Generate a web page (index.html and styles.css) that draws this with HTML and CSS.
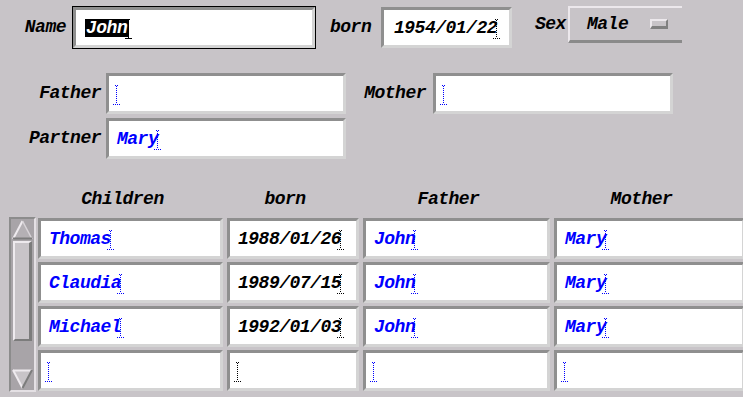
FILE: index.html
```html
<!DOCTYPE html>
<html>
<head>
<meta charset="utf-8">
<link rel="stylesheet" href="styles.css">
</head>
<body>
<div class="win">
  <div class="row1">
    <div class="lbl l-name">Name</div>
    <div class="tf tf-focus w-name"><span class="sel">John</span><svg class="car car-solid" width="7" height="20" viewBox="0 0 7 20"><path d="M2 .5h3M3.5 1v18M0 19.5h7" stroke="#000"/></svg></div>
    <div class="lbl l-born">born</div>
    <div class="tf w-born"><span>1954/01/22</span><svg class="car" width="7" height="20" viewBox="0 0 7 20"><path d="M2 .5h3M3.5 1v18M0 19.5h7" stroke="#000" stroke-dasharray="1 1"/></svg></div>
    <div class="lbl l-sex">Sex</div>
    <div class="opt"><span>Male</span><span class="ind"></span></div>
  </div>

  <div class="rel">
    <div class="lbl rl">Father</div>
    <div class="tf blue"><svg class="car" width="7" height="20" viewBox="0 0 7 20"><path d="M2 .5h3M3.5 1v18M0 19.5h7" stroke="#00f" stroke-dasharray="1 1"/></svg></div>
    <div class="lbl rl rl2">Mother</div>
    <div class="tf blue"><svg class="car" width="7" height="20" viewBox="0 0 7 20"><path d="M2 .5h3M3.5 1v18M0 19.5h7" stroke="#00f" stroke-dasharray="1 1"/></svg></div>
    <div class="lbl rl">Partner</div>
    <div class="tf blue"><span>Mary</span><svg class="car" width="7" height="20" viewBox="0 0 7 20"><path d="M2 .5h3M3.5 1v18M0 19.5h7" stroke="#00f" stroke-dasharray="1 1"/></svg></div>
  </div>

  <div class="hdr">
    <div class="h">Children</div>
    <div class="h">born</div>
    <div class="h">Father</div>
    <div class="h">Mother</div>
  </div>

  <div class="tbl">
    <div class="sb">
      <svg class="arr" width="21" height="20" viewBox="0 0 21 20">
        <polygon points="10.5,1 1,19 20,19" fill="#b4b0b4"/>
        <path d="M10.5 1L1 19" stroke="#eeeaee" stroke-width="2"/>
        <path d="M10.5 1L20 19" stroke="#d8d4d8" stroke-width="1.5"/>
        <path d="M1 18.5H20" stroke="#7c7c7c" stroke-width="2"/>
      </svg>
      <div class="thumb"></div>
      <div class="sp"></div>
      <svg class="arr" width="21" height="20" viewBox="0 0 21 20">
        <polygon points="1,1 20,1 10.5,19" fill="#c8c4c8"/>
        <path d="M1 1.5H20" stroke="#eeeaee" stroke-width="2"/>
        <path d="M1 1L10.5 19" stroke="#eeeaee" stroke-width="2"/>
        <path d="M20 1L10.5 19" stroke="#7c7c7c" stroke-width="2"/>
      </svg>
    </div>
    <div class="cells">
      <div class="tf blue"><span>Thomas</span><svg class="car" width="7" height="20" viewBox="0 0 7 20"><path d="M2 .5h3M3.5 1v18M0 19.5h7" stroke="#00f" stroke-dasharray="1 1"/></svg></div>
      <div class="tf"><span>1988/01/26</span><svg class="car" width="7" height="20" viewBox="0 0 7 20"><path d="M2 .5h3M3.5 1v18M0 19.5h7" stroke="#000" stroke-dasharray="1 1"/></svg></div>
      <div class="tf blue"><span>John</span><svg class="car" width="7" height="20" viewBox="0 0 7 20"><path d="M2 .5h3M3.5 1v18M0 19.5h7" stroke="#00f" stroke-dasharray="1 1"/></svg></div>
      <div class="tf blue"><span>Mary</span><svg class="car" width="7" height="20" viewBox="0 0 7 20"><path d="M2 .5h3M3.5 1v18M0 19.5h7" stroke="#00f" stroke-dasharray="1 1"/></svg></div>

      <div class="tf blue"><span>Claudia</span><svg class="car" width="7" height="20" viewBox="0 0 7 20"><path d="M2 .5h3M3.5 1v18M0 19.5h7" stroke="#00f" stroke-dasharray="1 1"/></svg></div>
      <div class="tf"><span>1989/07/15</span><svg class="car" width="7" height="20" viewBox="0 0 7 20"><path d="M2 .5h3M3.5 1v18M0 19.5h7" stroke="#000" stroke-dasharray="1 1"/></svg></div>
      <div class="tf blue"><span>John</span><svg class="car" width="7" height="20" viewBox="0 0 7 20"><path d="M2 .5h3M3.5 1v18M0 19.5h7" stroke="#00f" stroke-dasharray="1 1"/></svg></div>
      <div class="tf blue"><span>Mary</span><svg class="car" width="7" height="20" viewBox="0 0 7 20"><path d="M2 .5h3M3.5 1v18M0 19.5h7" stroke="#00f" stroke-dasharray="1 1"/></svg></div>

      <div class="tf blue"><span>Michael</span><svg class="car" width="7" height="20" viewBox="0 0 7 20"><path d="M2 .5h3M3.5 1v18M0 19.5h7" stroke="#00f" stroke-dasharray="1 1"/></svg></div>
      <div class="tf"><span>1992/01/03</span><svg class="car" width="7" height="20" viewBox="0 0 7 20"><path d="M2 .5h3M3.5 1v18M0 19.5h7" stroke="#000" stroke-dasharray="1 1"/></svg></div>
      <div class="tf blue"><span>John</span><svg class="car" width="7" height="20" viewBox="0 0 7 20"><path d="M2 .5h3M3.5 1v18M0 19.5h7" stroke="#00f" stroke-dasharray="1 1"/></svg></div>
      <div class="tf blue"><span>Mary</span><svg class="car" width="7" height="20" viewBox="0 0 7 20"><path d="M2 .5h3M3.5 1v18M0 19.5h7" stroke="#00f" stroke-dasharray="1 1"/></svg></div>

      <div class="tf blue"><svg class="car" width="7" height="20" viewBox="0 0 7 20"><path d="M2 .5h3M3.5 1v18M0 19.5h7" stroke="#00f" stroke-dasharray="1 1"/></svg></div>
      <div class="tf"><svg class="car" width="7" height="20" viewBox="0 0 7 20"><path d="M2 .5h3M3.5 1v18M0 19.5h7" stroke="#000" stroke-dasharray="1 1"/></svg></div>
      <div class="tf blue"><svg class="car" width="7" height="20" viewBox="0 0 7 20"><path d="M2 .5h3M3.5 1v18M0 19.5h7" stroke="#00f" stroke-dasharray="1 1"/></svg></div>
      <div class="tf blue"><svg class="car" width="7" height="20" viewBox="0 0 7 20"><path d="M2 .5h3M3.5 1v18M0 19.5h7" stroke="#00f" stroke-dasharray="1 1"/></svg></div>
    </div>
  </div>
</div>
</body>
</html>
```

FILE: styles.css
```css
html, body {
  margin: 0;
  padding: 0;
  background: #c8c4c8;
}
.win {
  width: 743px;
  height: 397px;
  overflow: hidden;
  background: #c8c4c8;
  font-family: "Liberation Mono", "Courier New", monospace;
  font-weight: bold;
  font-style: italic;
  font-size: 18px;
  letter-spacing: -0.5px;
  color: #000;
}
.lbl {
  box-sizing: border-box;
  height: 43px;
  line-height: 43px;
  white-space: nowrap;
}
.tf {
  box-sizing: border-box;
  margin: 1px;
  height: 41px;
  border: 3px solid;
  border-color: #8f8f8f #d4d4d4 #d4d4d4 #8f8f8f;
  background: #fff;
  display: flex;
  align-items: center;
  padding-left: 8px;
  white-space: nowrap;
  overflow: hidden;
}
.tf-focus {
  box-shadow: 0 0 0 1px #000;
}
.blue {
  color: #0000ff;
}
.car {
  flex: none;
  margin-left: -4px;
  margin-top: 2px;
}
.car-solid {
  margin-left: -3px;
}
.sel {
  background: #000;
  color: #fff;
  line-height: 18px;
  padding: 0 1px 0 1px;
}

/* row 1 */
.row1 {
  display: flex;
  align-items: flex-start;
  margin-top: 6px;
}
.l-name {
  width: 72px;
  text-align: right;
  padding-right: 6px;
}
.w-name {
  width: 242px;
  padding-left: 9px;
}
.l-born {
  width: 64px;
  padding-left: 14px;
}
.w-born {
  width: 131px;
  padding-left: 10px;
}
.l-sex {
  width: 55px;
  padding-left: 22px;
  height: 37px;
  line-height: 37px;
}
.opt {
  box-sizing: border-box;
  width: 114px;
  height: 37px;
  border-top: 2px solid #ece8ec;
  border-left: 2px solid #ece8ec;
  border-bottom: 3px solid #8a8a8a;
  display: flex;
  align-items: center;
  padding-left: 17px;
}
.ind {
  box-sizing: border-box;
  width: 18px;
  height: 10px;
  margin-left: auto;
  margin-right: 14px;
  border-top: 2px solid #ece8ec;
  border-left: 2px solid #ece8ec;
  border-bottom: 3px solid #808080;
  border-right: 2px solid #808080;
  background: #c8c4c8;
}

/* relatives */
.rel {
  display: grid;
  grid-template-columns: 105px 242px 85px 242px;
  row-gap: 2px;
  margin-top: 23px;
}
.rl {
  text-align: right;
  padding-right: 4px;
}
.rl2 {
  padding-right: 6px;
}

/* headers */
.hdr {
  display: grid;
  grid-template-columns: 187px 134px 189px 193px;
  column-gap: 2px;
  margin-top: 27px;
  padding-left: 37px;
  height: 24px;
}
.h {
  text-align: center;
  line-height: 24px;
  padding-right: 16px;
}

/* table */
.tbl {
  display: flex;
  margin-top: 6px;
}
.sb {
  box-sizing: border-box;
  margin-left: 9px;
  width: 27px;
  height: 175px;
  border: 2px solid;
  border-color: #8c8c8c #e4e0e4 #e4e0e4 #8c8c8c;
  background: #a8a4a8;
  padding: 1px;
  display: flex;
  flex-direction: column;
  flex: none;
}
.arr {
  display: block;
  flex: none;
}
.thumb {
  box-sizing: border-box;
  flex: none;
  height: 100px;
  margin: 1px 1px 0 1px;
  border: 2px solid;
  border-color: #eeeaee #7c7c7c #7c7c7c #eeeaee;
  border-right-width: 3px;
  background: #c8c4c8;
}
.sp {
  flex: 1;
}
.cells {
  display: grid;
  grid-template-columns: 187px 134px 189px 193px;
  grid-auto-rows: 43px;
  column-gap: 2px;
  row-gap: 1px;
  margin-left: 1px;
}
```
